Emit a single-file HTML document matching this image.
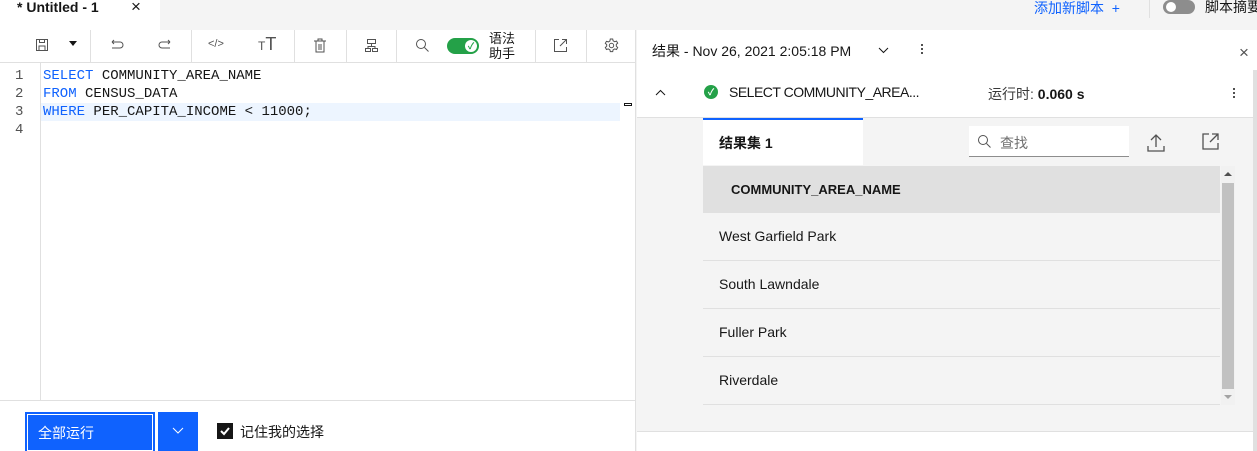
<!DOCTYPE html>
<html><head><meta charset="utf-8"><style>
*{margin:0;padding:0;box-sizing:border-box}
body{width:1257px;height:451px;overflow:hidden;background:#f4f4f4;font-family:"Liberation Sans","Noto Sans CJK SC",sans-serif;color:#161616;position:relative;font-size:14px}
.a{position:absolute;white-space:nowrap}
.sep{position:absolute;top:30px;width:1px;height:33px;background:#e0e0e0}
.ic{position:absolute;top:38px}
.code{font-family:"Liberation Mono",monospace;font-size:14px;line-height:18px}
.kw{color:#0f62fe}
.row{position:absolute;left:703px;width:517px;height:48px;border-bottom:1px solid #e0e0e0;font-size:14px;line-height:47px;padding-left:16px}
</style></head><body>
<div class="a" style="left:0;top:0;width:160px;height:30px;background:#fff"></div>
<div class="a" style="left:17px;top:-1px;font-size:14px;font-weight:bold">* Untitled - 1</div>
<div class="a" style="left:131px;top:-3px;font-size:17px">×</div>
<div class="a" style="left:1034px;top:-2px;color:#0f62fe;font-size:14px">添加新脚本 &nbsp;+</div>
<div class="a" style="left:1149px;top:0;width:1px;height:18px;background:#e0e0e0"></div>
<div class="a" style="left:1163px;top:0;width:32px;height:14px;border-radius:7px;background:#8d8d8d"></div>
<div class="a" style="left:1166px;top:2px;width:10px;height:10px;border-radius:5px;background:#fff"></div>
<div class="a" style="left:1205px;top:-3px;font-size:14px">脚本摘要</div>

<div class="a" style="left:0;top:30px;width:636px;height:421px;background:#fff;border-right:1px solid #e0e0e0"></div>
<div class="a" style="left:0;top:62px;width:636px;height:1px;background:#e0e0e0"></div>
<div class="sep" style="left:90px"></div><div class="sep" style="left:191px"></div><div class="sep" style="left:294px"></div><div class="sep" style="left:346px"></div><div class="sep" style="left:396px"></div><div class="sep" style="left:535px"></div><div class="sep" style="left:586px"></div>
<svg class="ic" style="left:35px" width="14" height="14" viewBox="0 0 14 14" fill="none" stroke="#525252"><rect x="1.5" y="1.5" width="11" height="11"/><rect x="4.5" y="1.5" width="5" height="3"/><rect x="4" y="8" width="6" height="4.5"/></svg>
<div class="a" style="left:69px;top:41px;width:0;height:0;border-left:4px solid transparent;border-right:4px solid transparent;border-top:5px solid #161616"></div>
<svg class="ic" style="left:108px" width="16" height="14" viewBox="0 0 16 14" fill="none" stroke="#525252"><path d="M4 4h8a3 3 0 0 1 0 6H4M4 4l2-2M4 4l2 2"/></svg>
<svg class="ic" style="left:158px" width="16" height="14" viewBox="0 0 16 14" fill="none" stroke="#525252"><path d="M12 4H4a3 3 0 0 0 0 6h8M12 4l-2-2M12 4l-2 2"/></svg>
<div class="a" style="left:208px;top:38px;font-size:11px;color:#525252">&lt;/&gt;</div>
<div class="a" style="left:258px;top:34px;font-size:18px;color:#525252"><span style="font-size:12px">T</span>T</div>
<svg class="ic" style="left:313px" width="14" height="15" viewBox="0 0 14 15" fill="none" stroke="#525252"><path d="M1 3h12M5 3V1h4v2M3 3v11h8V3M6 6v6M8 6v6"/></svg>
<svg class="ic" style="left:364px" width="15" height="15" viewBox="0 0 15 15" fill="none" stroke="#525252"><rect x="3.5" y="1.5" width="8" height="4"/><rect x="1.5" y="10.5" width="5" height="3"/><rect x="8.5" y="10.5" width="5" height="3"/><path d="M7.5 5.5v3M4 10.5v-2h7v2"/></svg>
<svg class="ic" style="left:415px" width="15" height="15" viewBox="0 0 15 15" fill="none" stroke="#525252"><circle cx="6" cy="6" r="4.5"/><path d="M9.5 9.5l4 4"/></svg>
<div class="a" style="left:447px;top:38px;width:32px;height:16px;border-radius:8px;background:#24a148"></div>
<div class="a" style="left:465px;top:40px;width:12px;height:12px;border-radius:6px;background:#fff;color:#24a148;font-size:9px;text-align:center;line-height:12px;font-weight:bold">✓</div>
<div class="a" style="left:489px;top:31px;font-size:13px;line-height:15px">语法<br>助手</div>
<svg class="ic" style="left:553px" width="15" height="15" viewBox="0 0 15 15" fill="none" stroke="#525252"><path d="M6 1.5H1.5v12h12V9M9 1.5h4.5V6M13.5 1.5L7 8"/></svg>
<svg class="ic" style="left:604px" width="15" height="15" viewBox="0 0 15 15" fill="none" stroke="#525252"><circle cx="7.5" cy="7.5" r="2.2"/><path d="M6.3 1h2.4l.4 1.8 1.6.9 1.8-.6 1.2 2-1.4 1.3v1.8l1.4 1.3-1.2 2-1.8-.6-1.6.9-.4 1.8H6.3l-.4-1.8-1.6-.9-1.8.6-1.2-2 1.4-1.3V6.6L1.3 5.3l1.2-2 1.8.6 1.6-.9z"/></svg>

<div class="a" style="left:40px;top:63px;width:1px;height:337px;background:#e0e0e0"></div>
<div class="a" style="left:41px;top:103px;width:579px;height:18px;background:#edf5ff"></div>
<div class="a code" style="left:15px;top:67px;color:#525252">1<br>2<br>3<br>4</div>
<div class="a code" style="left:43px;top:67px"><span class="kw">SELECT</span> COMMUNITY_AREA_NAME<br><span class="kw">FROM</span> CENSUS_DATA<br><span class="kw">WHERE</span> PER_CAPITA_INCOME &lt; 11000;</div>
<div class="a" style="left:624px;top:103px;width:8px;height:3px;border:1px solid #161616"></div>

<div class="a" style="left:0;top:400px;width:636px;height:1px;background:#e0e0e0"></div>
<div class="a" style="left:25px;top:412px;width:130px;height:39px;background:#0f62fe;border:1px solid #0f62fe"></div>
<div class="a" style="left:27px;top:414px;width:126px;height:37px;border:1px solid #fff"></div>
<div class="a" style="left:38px;top:423px;color:#fff;font-size:14px">全部运行</div>
<div class="a" style="left:158px;top:412px;width:40px;height:39px;background:#0f62fe"></div>
<svg class="a" style="left:172px;top:427px" width="12" height="8" viewBox="0 0 12 8" fill="none" stroke="#fff"><path d="M1 1l5 5 5-5"/></svg>
<div class="a" style="left:217px;top:423px;width:16px;height:16px;background:#161616"></div>
<svg class="a" style="left:217px;top:423px" width="16" height="16" viewBox="0 0 16 16" fill="none" stroke="#fff" stroke-width="2"><path d="M4 8l3 3 5-6"/></svg>
<div class="a" style="left:240px;top:422px;font-size:14px">记住我的选择</div>

<div class="a" style="left:637px;top:30px;width:620px;height:421px;background:#fff"></div>
<div class="a" style="left:652px;top:41px;font-size:14px">结果 - Nov 26, 2021 2:05:18 PM</div>
<svg class="a" style="left:878px;top:47px" width="11" height="7" viewBox="0 0 11 7" fill="none" stroke="#161616"><path d="M1 1l4.5 4.5L10 1"/></svg>
<div class="a" style="left:921px;top:43px;width:2px;height:11px;background:radial-gradient(circle,#161616 1px,transparent 1px) 0 0/2px 4px"></div>
<div class="a" style="left:1239px;top:43px;font-size:17px;color:#525252">×</div>
<svg class="a" style="left:655px;top:89px" width="11" height="7" viewBox="0 0 11 7" fill="none" stroke="#161616"><path d="M1 6l4.5-4.5L10 6"/></svg>
<div class="a" style="left:704px;top:85px;width:14px;height:14px;border-radius:7px;background:#24a148;color:#fff;font-size:9px;text-align:center;line-height:14px;font-weight:bold">✓</div>
<div class="a" style="left:729px;top:84px;font-size:14px;letter-spacing:-0.5px">SELECT COMMUNITY_AREA...</div>
<div class="a" style="left:988px;top:84px;font-size:14px;color:#393939">运行时: <b style="color:#161616">0.060 s</b></div>
<div class="a" style="left:1233px;top:87px;width:2px;height:11px;background:radial-gradient(circle,#161616 1px,transparent 1px) 0 0/2px 4px"></div>

<div class="a" style="left:637px;top:117px;width:616px;height:315px;background:#f4f4f4;border-top:1px solid #e0e0e0;border-bottom:1px solid #e0e0e0"></div>
<div class="a" style="left:1253px;top:70px;width:4px;height:381px;background:#e0e0e0"></div>
<div class="a" style="left:703px;top:118px;width:160px;height:47px;background:#fff;border-top:2px solid #0f62fe"></div>
<div class="a" style="left:719px;top:133px;font-size:14px;font-weight:bold">结果集 1</div>
<div class="a" style="left:969px;top:126px;width:160px;height:31px;background:#fff;border-bottom:1px solid #8d8d8d"></div>
<svg class="a" style="left:977px;top:134px" width="15" height="15" viewBox="0 0 15 15" fill="none" stroke="#525252"><circle cx="6" cy="6" r="4.5"/><path d="M9.5 9.5l4 4"/></svg>
<div class="a" style="left:1000px;top:133px;font-size:14px;color:#6f6f6f">查找</div>
<svg class="a" style="left:1147px;top:133px" width="18" height="19" viewBox="0 0 18 19" fill="none" stroke="#525252" stroke-width="1.3"><path d="M9 14V2M4 7l5-5 5 5M1 13v5h16v-5"/></svg>
<svg class="a" style="left:1202px;top:133px" width="17" height="17" viewBox="0 0 17 17" fill="none" stroke="#525252" stroke-width="1.3"><path d="M7 1H1v15h15v-6M10 1h6v6M16 1L8 9"/></svg>

<div class="a" style="left:703px;top:166px;width:517px;height:47px;background:#e0e0e0"></div>
<div class="a" style="left:731px;top:182px;font-size:13px;font-weight:bold;color:#161616">COMMUNITY_AREA_NAME</div>
<div class="row" style="top:213px">West Garfield Park</div>
<div class="row" style="top:261px">South Lawndale</div>
<div class="row" style="top:309px">Fuller Park</div>
<div class="row" style="top:357px">Riverdale</div>
<div class="a" style="left:1221px;top:166px;width:14px;height:239px;background:#f1f1f1"></div>
<div class="a" style="left:1222px;top:183px;width:12px;height:206px;background:#c1c1c1"></div>
<div class="a" style="left:1224px;top:172px;border-left:4px solid transparent;border-right:4px solid transparent;border-bottom:4px solid #505050"></div>
<div class="a" style="left:1224px;top:395px;border-left:4px solid transparent;border-right:4px solid transparent;border-top:4px solid #a3a3a3"></div>
</body></html>
